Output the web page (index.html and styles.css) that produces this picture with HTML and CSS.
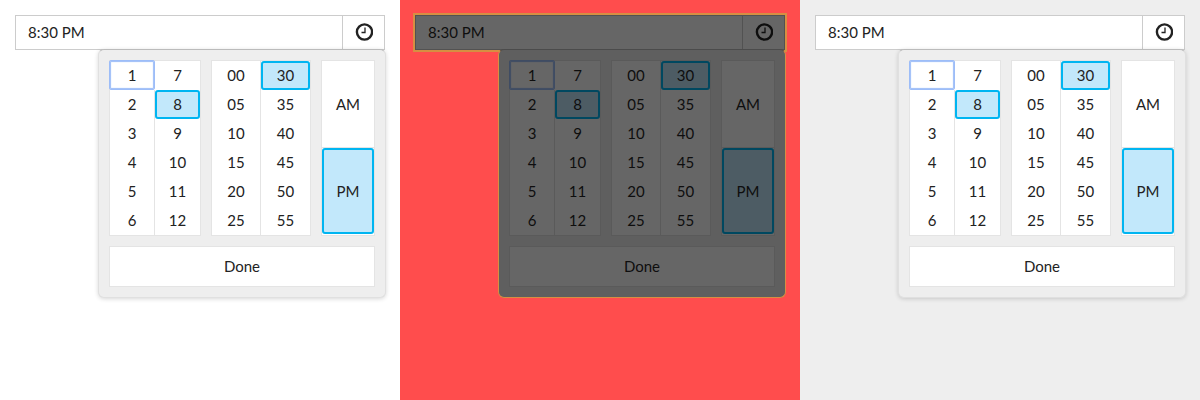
FILE: index.html
```
<!DOCTYPE html>
<html lang="en">
<head>
<meta charset="utf-8">
<title>Time picker</title>
<link rel="stylesheet" href="styles.css">
</head>
<body>
<main class="themes" id="themes"></main>
<template id="picker">
  <section class="pane">
    <div class="field">
      <input class="field-input" type="text" value="8:30 PM" aria-label="Time">
      <button class="field-toggle" type="button" aria-label="Choose time">
        <svg class="clock" viewBox="0 0 18 18" aria-hidden="true"><circle cx="9.5" cy="9" r="7.6"/><path d="M10 4.5V9.5H6.5"/></svg>
      </button>
      <div class="popup">
        <div class="groups">
          <div class="group hours"></div>
          <div class="group minutes"></div>
          <div class="group meridiem"></div>
        </div>
        <button class="done" type="button">Done</button>
      </div>
    </div>
  </section>
</template>
<script src="picker.js"></script>
</body>
</html>
```

FILE: styles.css
```
* { box-sizing: border-box; }

body {
  margin: 0;
  color: #222;
  font: 15px/20px Lato, "Liberation Sans", sans-serif;
}

button, input { font: inherit; color: inherit; margin: 0; }

.themes {
  display: grid;
  grid-template-columns: repeat(3, 1fr);
  min-height: 100vh;
}

.pane {
  --surface: #fff;
  --panel: #eee;
  --line: #ccc;
  --rule: #e4e4e4;
  --accent: #00b5f1;
  --accent-fill: #c2e8fb;
  --focus: #9dbdf8;
  --edge: #e0e0e0;
  --edge-top: #bbb;
  padding: 15px;
  background: #fff;
}

.pane.muted { background: #eee; }

.pane.changed {
  --surface: #666;
  --panel: #5f5f5f;
  --line: #525252;
  --rule: #5a5a5a;
  --accent: #004860;
  --accent-fill: #4d5c64;
  --focus: #3f4c63;
  --edge: #d68f42;
  --edge-top: #4b4b4b;
  background: #ff4d4d;
  color: #0e0e0e;
}

.field {
  position: relative;
  display: flex;
  height: 35px;
  border: 1px solid var(--line);
  background: var(--surface);
}

.changed .field { box-shadow: 0 0 0 2px #d68f42; }

.field-input {
  flex: 1;
  min-width: 0;
  padding: 0 12px 2px;
  border: 0;
  background: none;
  outline: 0;
}

.field-toggle {
  display: grid;
  place-items: center;
  width: 42px;
  padding: 0 0 2px;
  border: 0;
  border-left: 1px solid var(--line);
  background: none;
}

.clock {
  width: 18px;
  height: 18px;
  fill: none;
  stroke: currentColor;
  stroke-width: 2.4;
}

.clock path { stroke-width: 1.3; }

.popup {
  position: absolute;
  top: 33px;
  right: -2px;
  width: 288px;
  padding: 10px;
  border: 1px solid var(--edge);
  border-top-color: var(--edge-top);
  border-radius: 6px;
  background: var(--panel);
  box-shadow: 0 1px 4px rgba(0, 0, 0, .16);
}

.changed .popup { box-shadow: none; }

.groups {
  display: grid;
  grid-template-columns: 92fr 100fr 54fr;
  gap: 10px;
}

.group {
  display: grid;
  grid-auto-flow: column;
  grid-template-rows: repeat(6, 29px);
  grid-auto-columns: 1fr;
  border: 1px solid var(--rule);
  background: var(--surface);
}

.meridiem { grid-template-rows: repeat(2, 87px); }

.cell {
  padding: 0 0 2px;
  border: 0;
  border-right: 1px solid var(--rule);
  background: none;
}

.cell:nth-child(n + 7) { border-right: 0; }

.meridiem .cell {
  padding: 0;
  border-right: 0;
  border-bottom: 1px solid var(--rule);
}

.group .cell.selected {
  border: 2px solid var(--accent);
  border-radius: 3px;
  background: var(--accent-fill);
}

.meridiem .cell.selected { margin-bottom: 1px; }

.cell.focused {
  margin: -1px 0 0 -1px;
  padding: 0;
  border: 1px solid var(--focus);
  border-radius: 2px;
  box-shadow: inset 0 0 1px 1px var(--focus);
}

.done {
  display: block;
  width: 100%;
  height: 41px;
  margin-top: 10px;
  padding: 0 0 2px;
  border: 1px solid var(--rule);
  background: var(--surface);
}
```

FILE: picker.js
```
const template = document.getElementById('picker');
const themes = document.getElementById('themes');

const groups = {
  hours: ['1', '2', '3', '4', '5', '6', '7', '8', '9', '10', '11', '12'],
  minutes: ['00', '05', '10', '15', '20', '25', '30', '35', '40', '45', '50', '55'],
  meridiem: ['AM', 'PM']
};
const selected = { hours: '8', minutes: '30', meridiem: 'PM' };

for (const theme of ['plain', 'changed', 'muted']) {
  const pane = template.content.cloneNode(true);
  pane.querySelector('.pane').classList.add(theme);
  for (const [name, values] of Object.entries(groups)) {
    const group = pane.querySelector('.' + name);
    for (const value of values) {
      const cell = document.createElement('button');
      cell.type = 'button';
      cell.className = 'cell';
      cell.textContent = value;
      if (value === selected[name]) cell.classList.add('selected');
      if (name === 'hours' && value === '1') cell.classList.add('focused');
      group.append(cell);
    }
  }
  themes.append(pane);
}
```
